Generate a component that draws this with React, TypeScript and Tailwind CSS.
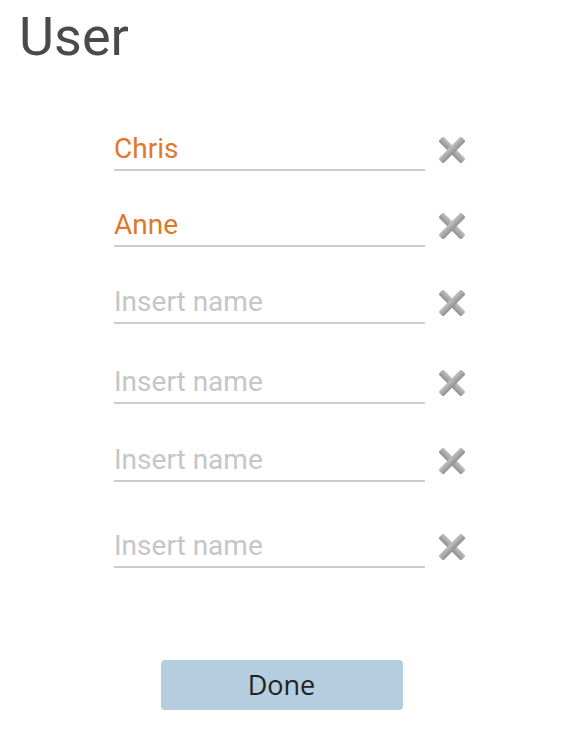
const rows = [
  { value: "Chris", mt: "mt-[71px]" },
  { value: "Anne", mt: "mt-[40px]" },
  { value: "", mt: "mt-[41px]" },
  { value: "", mt: "mt-[44px]" },
  { value: "", mt: "mt-[42px]" },
  { value: "", mt: "mt-[50px]" },
];

function ClearIcon() {
  return (
    <svg width="26" height="26" viewBox="0 0 26 26" className="mt-[2px] ml-[14px] shrink-0">
      <defs>
        <linearGradient id="xg" x1="0" y1="0" x2="0" y2="1">
          <stop offset="0" stopColor="#c2c2c2" />
          <stop offset="1" stopColor="#909090" />
        </linearGradient>
      </defs>
      <g fill="url(#xg)">
        <rect x="-3" y="9.5" width="32" height="7" rx="2" transform="rotate(45 13 13)" />
        <rect x="-3" y="9.5" width="32" height="7" rx="2" transform="rotate(-45 13 13)" />
      </g>
    </svg>
  );
}

export default function App() {
  return (
    <div className="w-[563px] h-[750px] bg-white flex flex-col font-['Roboto',sans-serif]">
      <h1 className="pt-[10px] pl-[19px] text-[54px] leading-none text-[#4a4a4a]">User</h1>
      <div className="flex flex-col pl-[114px]">
        {rows.map((r, i) => (
          <div key={i} className={`flex items-start ${r.mt}`}>
            <div className="w-[311px] pb-[6px] border-b-2 border-[#cdcdcd]">
              <span
                className={
                  r.value
                    ? "block text-[28px] leading-none text-[#dc7a2c]"
                    : "block text-[28px] leading-none text-[#c6c6c6]"
                }
              >
                {r.value || "Insert name"}
              </span>
            </div>
            <ClearIcon />
          </div>
        ))}
      </div>
      <div className="flex justify-center mt-[92px]">
        <button className="w-[242px] h-[50px] rounded-[4px] bg-[#b5cedf] text-[27px] text-[#222] font-['Open_Sans',sans-serif]">
          Done
        </button>
      </div>
    </div>
  );
}
